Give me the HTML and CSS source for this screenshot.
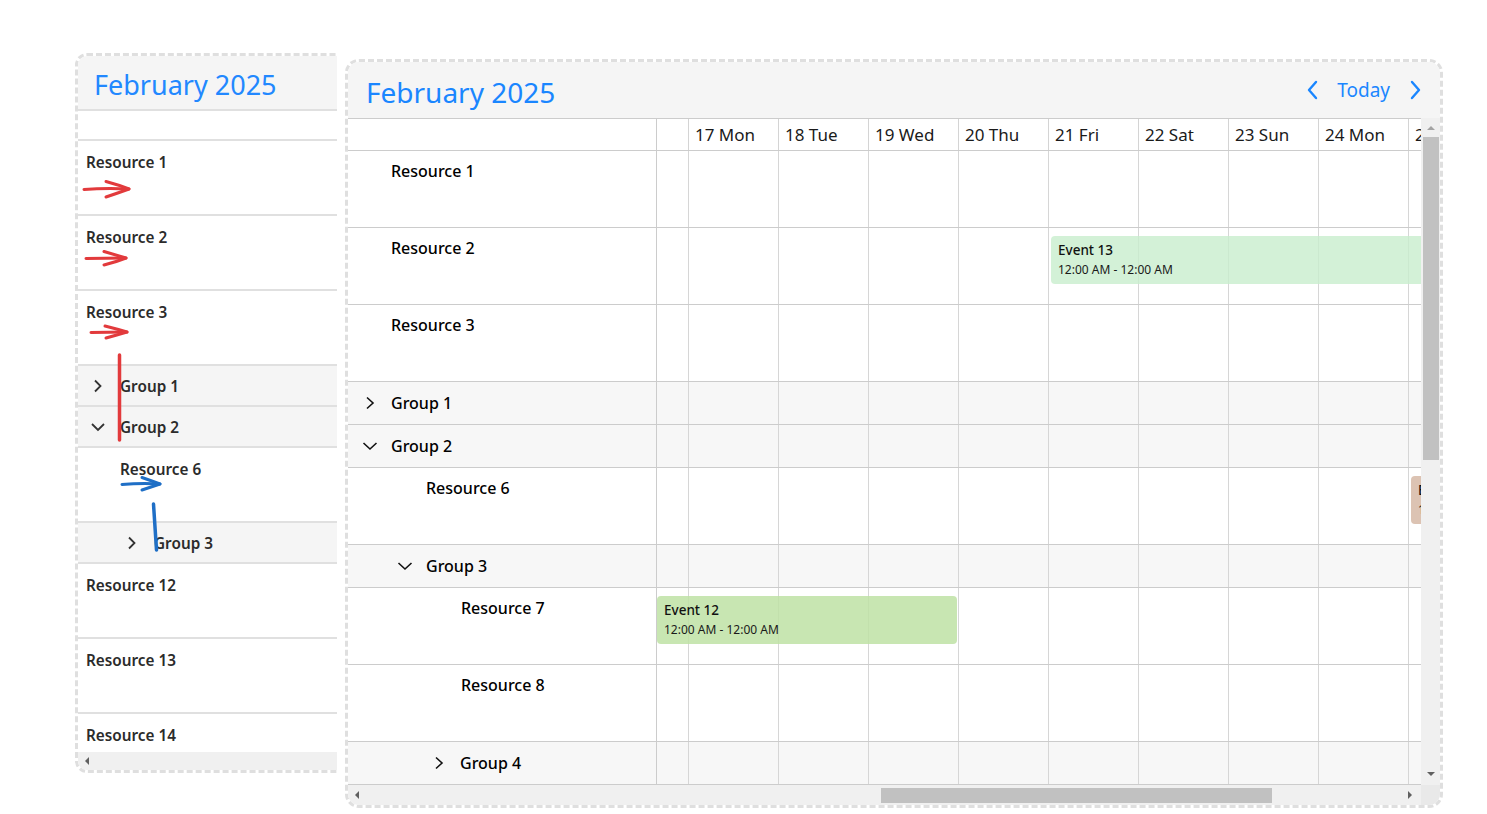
FILE: index.html
```html
<!DOCTYPE html>
<html lang="en">
<head>
<meta charset="utf-8">
<title>Scheduler</title>
<link rel="stylesheet" href="styles.css">
</head>
<body>
<div class="stage">
  <div class="mini-clip">
    <div class="mini">
      <div class="mini-head">February 2025</div>
      <div class="mini-blank"></div>
      <div class="m-res">Resource 1</div>
      <div class="m-res">Resource 2</div>
      <div class="m-res">Resource 3</div>
      <div class="m-grp"><svg class="m-chev" viewBox="0 0 20 20"><path d="M7 4.5L12.5 10 7 15.5"/></svg>Group 1</div>
      <div class="m-grp"><svg class="m-chev" viewBox="0 0 20 20"><path d="M4 7l6 6 6-6"/></svg>Group 2</div>
      <div class="m-res lvl1">Resource 6</div>
      <div class="m-grp lvl1"><svg class="m-chev" viewBox="0 0 20 20"><path d="M7 4.5L12.5 10 7 15.5"/></svg>Group 3</div>
      <div class="m-res">Resource 12</div>
      <div class="m-res">Resource 13</div>
      <div class="m-res last">Resource 14</div>
      <div class="m-hscroll"><span class="tri tri-left"></span></div>
    </div>
    <svg class="annot" viewBox="0 0 262 722" width="262" height="722">
      <g class="red">
        <path d="M9 136.5 Q30 135 54 136"/>
        <path d="M31 128.5 Q44 132 54 136 Q43 140 31 144"/>
        <path d="M11 205.5 Q30 205 51 205"/>
        <path d="M29 198.5 Q41 202 51 205 Q41 209 29 212"/>
        <path d="M16 279.5 Q33 279 52 279"/>
        <path d="M30 273 Q42 276 52 279 Q42 282 31 285"/>
        <path class="thick" d="M44.5 302 L44.5 387"/>
      </g>
      <g class="blue">
        <path d="M47 431.5 Q66 430 85 431"/>
        <path d="M67 424.5 Q77 428 85 431 Q76 434 67 437"/>
        <path class="thick" d="M78.5 451 L81.5 497"/>
      </g>
    </svg>
  </div>

  <div class="sched">
    <div class="sched-head">
      <div class="sched-title">February 2025</div>
      <div class="nav">
        <svg class="nav-chev" viewBox="0 0 14 20"><path d="M10 2L3 10l7 8"/></svg>
        <span class="today">Today</span>
        <svg class="nav-chev" viewBox="0 0 14 20"><path d="M4 2l7 8-7 8"/></svg>
      </div>
    </div>
    <div class="sched-main">
      <div class="grid">
        <div class="date-row">
          <div class="dh-name"></div>
          <div class="dh pre"></div>
          <div class="dh">17 Mon</div>
          <div class="dh">18 Tue</div>
          <div class="dh">19 Wed</div>
          <div class="dh">20 Thu</div>
          <div class="dh">21 Fri</div>
          <div class="dh">22 Sat</div>
          <div class="dh">23 Sun</div>
          <div class="dh">24 Mon</div>
          <div class="dh">25 Tue</div>
        </div>

        <div class="row res">
          <div class="name">Resource 1</div>
          <div class="cells"></div>
        </div>
        <div class="row res">
          <div class="name">Resource 2</div>
          <div class="cells">
            <div class="event ev-green ev13">
              <div class="ev-title">Event 13</div>
              <div class="ev-time">12:00 AM - 12:00 AM</div>
            </div>
          </div>
        </div>
        <div class="row res">
          <div class="name">Resource 3</div>
          <div class="cells"></div>
        </div>
        <div class="row grp">
          <div class="name"><svg class="chev" viewBox="0 0 20 20"><path d="M7 4.5L13 10l-6 5.5"/></svg>Group 1</div>
          <div class="cells"></div>
        </div>
        <div class="row grp">
          <div class="name"><svg class="chev" viewBox="0 0 20 20"><path d="M3.5 7l6.5 6 6.5-6"/></svg>Group 2</div>
          <div class="cells"></div>
        </div>
        <div class="row res l1">
          <div class="name">Resource 6</div>
          <div class="cells">
            <div class="event ev-brown ev6">
              <div class="ev-title">Event 6</div>
              <div class="ev-time">12:00 AM - 12:00 AM</div>
            </div>
          </div>
        </div>
        <div class="row grp l1">
          <div class="name"><svg class="chev" viewBox="0 0 20 20"><path d="M3.5 7l6.5 6 6.5-6"/></svg>Group 3</div>
          <div class="cells"></div>
        </div>
        <div class="row res l2">
          <div class="name">Resource 7</div>
          <div class="cells">
            <div class="event ev-lime ev12">
              <div class="ev-title">Event 12</div>
              <div class="ev-time">12:00 AM - 12:00 AM</div>
            </div>
          </div>
        </div>
        <div class="row res l2">
          <div class="name">Resource 8</div>
          <div class="cells"></div>
        </div>
        <div class="row grp l2">
          <div class="name"><svg class="chev" viewBox="0 0 20 20"><path d="M7 4.5L13 10l-6 5.5"/></svg>Group 4</div>
          <div class="cells"></div>
        </div>
      </div>
      <div class="vscroll">
        <span class="tri tri-up"></span>
        <div class="vthumb"></div>
        <span class="vspace"></span>
        <span class="tri tri-down"></span>
      </div>
    </div>
    <div class="hscroll-row">
      <div class="hscroll">
        <span class="tri tri-left"></span>
        <div class="hthumb"></div>
        <span class="tri tri-right"></span>
      </div>
      <div class="corner"></div>
    </div>
  </div>
</div>
</body>
</html>
```

FILE: styles.css
```css
* { box-sizing: border-box; margin: 0; padding: 0; }

body {
  background: #ffffff;
  font-family: "Noto Sans", "Open Sans", sans-serif;
  color: #1a1a1a;
  width: 1487px;
  height: 814px;
  overflow: hidden;
}

.stage {
  display: flex;
  align-items: flex-start;
  padding-left: 75px;
  gap: 8px;
}

/* ---------- left (mini) panel ---------- */
.mini-clip {
  position: relative;
  flex: none;
  margin-top: 53px;
  width: 262px;
  height: 722px;
  overflow: hidden;
}

.mini {
  width: 300px;
  height: 720px;
  border: 3px dashed #dfdfdf;
  border-radius: 12px;
  display: flex;
  flex-direction: column;
  overflow: hidden;
  background: #fff;
}

.mini-head {
  flex: none;
  height: 55px;
  background: #f5f5f5;
  border-bottom: 2px solid #e0e0e0;
  color: #2288ff;
  font-size: 27px;
  line-height: 53px;
  padding-left: 16px;
  padding-top: 2px;
}

.mini-blank {
  flex: none;
  height: 30px;
  border-bottom: 2px solid #e0e0e0;
}

.m-res {
  flex: none;
  height: 75px;
  border-bottom: 2px solid #e0e0e0;
  padding: 11px 0 0 8px;
  font-size: 15.3px;
  line-height: 20px;
  font-weight: 600;
  color: #2b2b2b;
}

.m-res.lvl1 { padding-left: 42px; }

.m-res.last {
  flex: 1;
  height: auto;
  border-bottom: none;
}

.m-grp {
  flex: none;
  height: 41px;
  background: #f5f5f5;
  border-bottom: 2px solid #e0e0e0;
  display: flex;
  align-items: center;
  padding-left: 10px;
  font-size: 15.3px;
  font-weight: 600;
  color: #2b2b2b;
}

.m-grp.lvl1 { padding-left: 44px; }

.m-chev {
  width: 20px;
  height: 20px;
  margin-right: 12px;
  fill: none;
  stroke: #333;
  stroke-width: 1.8;
}

.m-hscroll {
  flex: none;
  height: 18px;
  background: #f0f0f0;
  display: flex;
  align-items: center;
  padding-left: 7px;
}

.annot {
  position: absolute;
  left: 0;
  top: 0;
  pointer-events: none;
}

.annot path {
  fill: none;
  stroke-width: 3;
  stroke-linecap: round;
  stroke-linejoin: round;
}

.annot path.thick { stroke-width: 3.5; }

.annot .red path { stroke: #e23a3c; }
.annot .blue path { stroke: #1f6fc6; }

/* ---------- scheduler panel ---------- */
.sched {
  flex: none;
  margin-top: 59px;
  width: 1098px;
  height: 749px;
  border: 3px dashed #dfdfdf;
  border-radius: 14px;
  overflow: hidden;
  display: flex;
  flex-direction: column;
  background: #fff;
}

.sched-head {
  flex: none;
  height: 56px;
  background: #f5f5f5;
  display: flex;
  align-items: center;
  justify-content: space-between;
  padding: 3px 18px 0 18px;
}

.sched-title {
  color: #1a86ff;
  font-size: 28px;
}

.nav {
  display: flex;
  align-items: center;
  margin-top: -4px;
}

.nav-chev {
  width: 14px;
  height: 20px;
  fill: none;
  stroke: #1a86ff;
  stroke-width: 2.4;
  stroke-linecap: round;
  stroke-linejoin: round;
}

.today {
  color: #1a86ff;
  font-size: 19px;
  margin: 0 18px 0 17px;
}

.sched-main {
  flex: none;
  height: 667px;
  display: flex;
}

.grid {
  flex: 1;
  min-width: 0;
  overflow: hidden;
  display: flex;
  flex-direction: column;
}

.date-row {
  flex: none;
  height: 33px;
  display: flex;
  border-top: 1px solid #cccccc;
  border-bottom: 1px solid #cccccc;
  background: #fff;
}

.dh-name {
  flex: none;
  width: 309px;
  border-right: 1px solid #cccccc;
}

.dh {
  flex: none;
  width: 90px;
  border-right: 1px solid #d4d4d4;
  padding-left: 6px;
  font-size: 17px;
  line-height: 31px;
  color: #1a1a1a;
  white-space: nowrap;
}

.dh.pre { width: 32px; }

.row {
  flex: none;
  display: flex;
  border-bottom: 1px solid #cccccc;
}

.row.res { height: 77px; }
.row.grp { height: 43px; background: #f7f7f7; }

.name {
  flex: none;
  width: 309px;
  border-right: 1px solid #cccccc;
  font-size: 16px;
  font-weight: 500;
  color: #000;
  white-space: nowrap;
}

.res .name {
  padding: 9px 0 0 43px;
  line-height: 22px;
}

.res.l1 .name { padding-left: 78px; }
.res.l2 .name { padding-left: 113px; }

.grp .name {
  display: flex;
  align-items: center;
  padding-left: 12px;
}

.grp.l1 .name { padding-left: 47px; }
.grp.l2 .name { padding-left: 81px; }

.chev {
  width: 20px;
  height: 20px;
  margin-right: 11px;
  fill: none;
  stroke: #111;
  stroke-width: 1.6;
}

.cells {
  flex: 1;
  position: relative;
  background-image: linear-gradient(to right, transparent 89px, #d6d6d6 89px);
  background-size: 90px 100%;
  background-repeat: repeat-x;
  background-position: 32px 0;
}

.event {
  position: absolute;
  top: 8px;
  height: 48px;
  border-radius: 4px;
  padding: 5px 0 0 7px;
  white-space: nowrap;
  overflow: hidden;
}

.ev-title {
  font-size: 13.5px;
  font-weight: 500;
  line-height: 19px;
  color: #111;
}

.ev-time {
  font-size: 12px;
  line-height: 19px;
  color: #1a1a1a;
}

.ev-green { background: rgba(200, 238, 205, 0.8); }
.ev-lime  { background: rgba(190, 226, 165, 0.85); }
.ev-brown { background: #dcc3b3; }

.ev13 { left: 394px; width: 420px; }
.ev12 { left: 0; width: 300px; }
.ev6  { left: 754px; width: 200px; }

/* ---------- scrollbars ---------- */
.vscroll {
  flex: none;
  width: 19px;
  background: #f0f0f0;
  display: flex;
  flex-direction: column;
  align-items: center;
  padding: 8px 0 9px;
}

.vthumb {
  width: 16px;
  height: 323px;
  margin-top: 7px;
  margin-left: 1px;
  background: #c1c1c1;
}

.vspace { flex: 1; }

.hscroll-row {
  flex: none;
  height: 20px;
  display: flex;
}

.hscroll {
  flex: 1;
  background: #f0f0f0;
  display: flex;
  align-items: center;
  padding: 0 9px 0 7px;
}

.hthumb {
  width: 391px;
  height: 15px;
  margin-left: 522px;
  background: #c1c1c1;
}

.hscroll .tri-right { margin-left: auto; }

.corner {
  flex: none;
  width: 19px;
  background: #e9e9e9;
}

.tri {
  display: block;
  width: 0;
  height: 0;
}

.tri-left {
  border-top: 4px solid transparent;
  border-bottom: 4px solid transparent;
  border-right: 4px solid #606060;
}

.tri-right {
  border-top: 4px solid transparent;
  border-bottom: 4px solid transparent;
  border-left: 4px solid #606060;
}

.tri-up {
  border-left: 4px solid transparent;
  border-right: 4px solid transparent;
  border-bottom: 4px solid #a3a3a3;
}

.tri-down {
  border-left: 4px solid transparent;
  border-right: 4px solid transparent;
  border-top: 4px solid #606060;
}
```
